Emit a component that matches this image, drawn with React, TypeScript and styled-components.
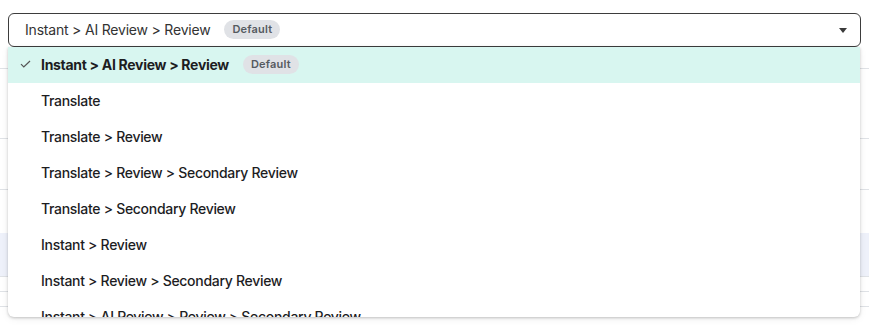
import React, { FunctionComponent } from "react";
import styled, { createGlobalStyle } from "styled-components";

const GlobalStyle = createGlobalStyle`
  body {
    margin: 0;
    background: #ffffff;
    font-family: Inter, "Open Sans", sans-serif;
  }
`;

const Page = styled.div`
  position: relative;
  width: 869px;
  height: 326px;
  overflow: hidden;
  padding-top: 13px;
  box-sizing: border-box;
`;

const SelectWrap = styled.div`
  position: relative;
  margin: 0 8px;
  z-index: 2;
`;

const Trigger = styled.div`
  display: flex;
  align-items: center;
  gap: 14px;
  height: 34px;
  box-sizing: border-box;
  padding: 0 13px 2px 16px;
  border: 1px solid #3d3d3d;
  border-radius: 6px;
  background: #fff;
  font-size: 14px;
  letter-spacing: -0.2px;
  color: #333;
`;

const Caret = styled.span`
  margin-left: auto;
  margin-top: 2px;
  width: 0;
  height: 0;
  border-left: 4.5px solid transparent;
  border-right: 4.5px solid transparent;
  border-top: 5px solid #3a3a3a;
`;

const Badge = styled.span`
  display: inline-flex;
  align-items: center;
  height: 19px;
  padding: 0 8px;
  border-radius: 10px;
  background: #e0e2e6;
  color: #555a60;
  font-size: 11px;
  font-weight: 600;
  letter-spacing: 0.2px;
`;

const Menu = styled.ul`
  position: absolute;
  top: 100%;
  left: 0;
  right: 1px;
  height: 270px;
  margin: 0;
  padding: 0;
  list-style: none;
  overflow: hidden;
  background: #fff;
  border-radius: 0 0 6px 6px;
  box-shadow: 0 1px 3px rgba(0, 0, 0, 0.22), 0 2px 8px rgba(0, 0, 0, 0.06);
`;

const Item = styled.li<{ $selected?: boolean }>`
  display: flex;
  align-items: center;
  gap: 9px;
  height: 36px;
  box-sizing: border-box;
  padding: 0 0 2px 10px;
  background: ${(p) => (p.$selected ? "#d8f6f0" : "transparent")};
  font-size: 14px;
  letter-spacing: -0.3px;
  font-weight: ${(p) => (p.$selected ? 700 : 500)};
  color: #1d1d1f;
`;

const Label = styled.span`
  margin-right: 5px;
`;

const CheckSlot = styled.span`
  display: flex;
  width: 14px;
  justify-content: center;
`;

const Backdrop = styled.div`
  display: flex;
  flex-direction: column;
`;

const BackRow = styled.div<{ $h: number; $tint?: boolean; $line?: boolean }>`
  height: ${(p) => p.$h}px;
  background: ${(p) => (p.$tint ? "#eef1fa" : "transparent")};
  border-bottom: ${(p) => (p.$line ? "1px solid #dfe2e6" : "1px solid transparent")};
`;

const Check = () => (
  <svg width="11" height="8" viewBox="0 0 11 8" fill="none">
    <path d="M1 4.2L3.8 7L10 1" stroke="#555" strokeWidth="1.2" />
  </svg>
);

const options = [
  "Instant > AI Review > Review",
  "Translate",
  "Translate > Review",
  "Translate > Review > Secondary Review",
  "Translate > Secondary Review",
  "Instant > Review",
  "Instant > Review > Secondary Review",
  "Instant > AI Review > Review > Secondary Review",
];

const App: FunctionComponent = () => {
  return (
    <Page>
      <GlobalStyle />
      <SelectWrap>
        <Trigger>
          <span>Instant &gt; AI Review &gt; Review</span>
          <Badge>Default</Badge>
          <Caret />
        </Trigger>
        <Menu>
          {options.map((o, i) => (
            <Item key={o} $selected={i === 0}>
              <CheckSlot>{i === 0 && <Check />}</CheckSlot>
              <Label>{o}</Label>
              {i === 0 && <Badge>Default</Badge>}
            </Item>
          ))}
        </Menu>
      </SelectWrap>
      <Backdrop>
        <BackRow $h={21} $line />
        <BackRow $h={69} $line />
        <BackRow $h={50} $line />
        <BackRow $h={42} />
        <BackRow $h={43} $tint $line />
        <BackRow $h={14} $line />
        <BackRow $h={14} $line />
      </Backdrop>
    </Page>
  );
};

export default App;
